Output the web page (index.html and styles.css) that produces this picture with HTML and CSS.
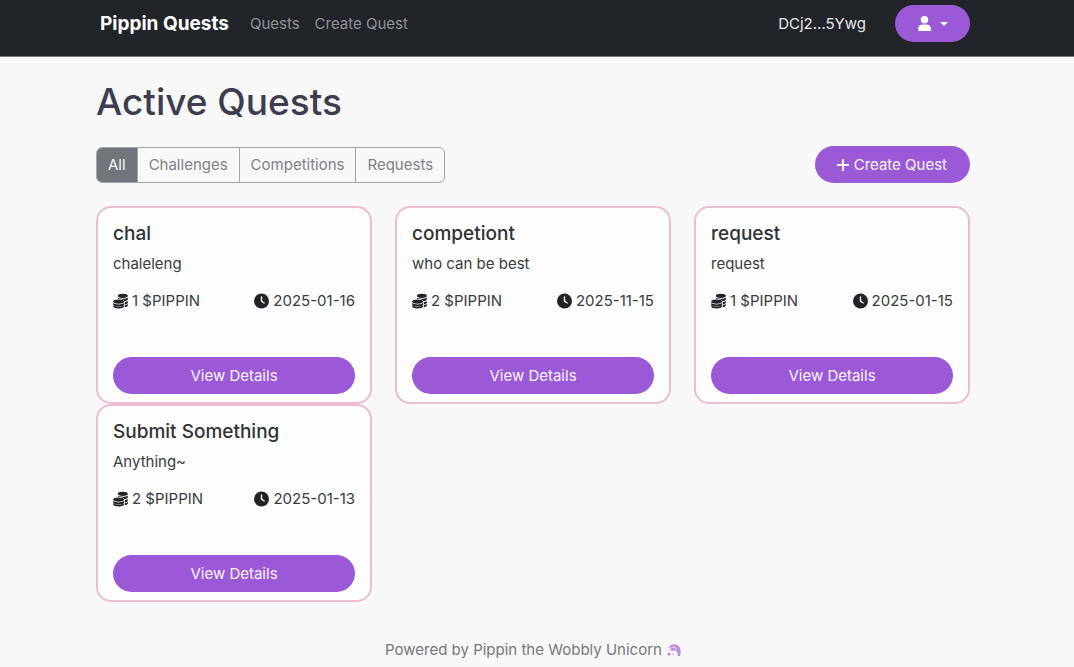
FILE: index.html
```html
<!DOCTYPE html>
<html lang="en">
<head>
    <meta charset="UTF-8">
    <meta name="viewport" content="width=device-width, initial-scale=1.0">
    <title>Pippin Quests</title>
    <link rel="stylesheet" href="styles.css">
</head>
<body>
    <!-- shared icons -->
    <svg class="sprite" aria-hidden="true">
        <symbol id="coins" viewBox="0 0 16 16">
            <ellipse cx="10.5" cy="2.5" rx="5.3" ry="2.3"/>
            <path d="M5.2 4.300c1.500 1.600 9 1.800 10.600-.1v1.800c0 1-1.500 1.900-3.600 2.100-1.200-1.700-4.200-2.500-7-2.400z"/>
            <path d="M12.600 9.100c1.300-.2 2.400-.6 3.200-1.200v1.900c0 .8-1.300 1.600-3.200 1.900z"/>
            <path d="M12.600 12.400c1.300-.2 2.400-.6 3.200-1.200v1.500c0 .8-1.300 1.600-3.200 1.900z"/>
            <ellipse cx="6" cy="8.600" rx="5.800" ry="2.200"/>
            <path d="M.2 10.200c1.700 1.900 9.900 1.900 11.600 0v2c0 2-11.600 2-11.600 0z"/>
            <path d="M.2 12.800c1.700 1.500 9.900 1.500 11.600 0v1c0 2.800-11.600 2.800-11.600 0z"/>
        </symbol>
        <symbol id="clock" viewBox="0 0 16 16">
            <circle cx="8" cy="8" r="8"/>
            <path d="M8 3.800v4.400l2.800 1.900" fill="none" stroke="#fdfdfd" stroke-width="1.500" stroke-linecap="round"/>
        </symbol>
    </svg>

    <header class="navbar">
        <nav class="container nav-inner">
            <a class="brand" href="#">Pippin Quests</a>
            <a class="nav-link" href="#">Quests</a>
            <a class="nav-link" href="#">Create Quest</a>
            <span class="wallet">DCj2...5Ywg</span>
            <button class="btn user-btn" type="button" aria-label="Account">
                <svg class="user-icon" viewBox="0 0 14 16">
                    <circle cx="7" cy="4" r="4"/>
                    <path d="M0 16v-2c0-3 2-5 5-5h4c3 0 5 2 5 5v2z"/>
                </svg>
                <span class="caret"></span>
            </button>
        </nav>
    </header>

    <main class="container">
        <h1 class="page-title">Active Quests</h1>

        <div class="toolbar">
            <div class="filters">
                <button class="filter active" type="button">All</button>
                <button class="filter" type="button">Challenges</button>
                <button class="filter" type="button">Competitions</button>
                <button class="filter" type="button">Requests</button>
            </div>
            <button class="btn create-btn" type="button">
                <svg class="plus-icon" viewBox="0 0 12 12"><path d="M6 0v12M0 6h12"/></svg>
                Create Quest
            </button>
        </div>

        <div class="quests">
            <article class="card">
                <h2 class="card-title">chal</h2>
                <p class="card-text">chaleleng</p>
                <div class="card-info">
                    <span class="info"><svg class="icon"><use href="#coins"/></svg>1 $PIPPIN</span>
                    <span class="info"><svg class="icon"><use href="#clock"/></svg>2025-01-16</span>
                </div>
                <button class="btn details-btn" type="button">View Details</button>
            </article>
            <article class="card">
                <h2 class="card-title">competiont</h2>
                <p class="card-text">who can be best</p>
                <div class="card-info">
                    <span class="info"><svg class="icon"><use href="#coins"/></svg>2 $PIPPIN</span>
                    <span class="info"><svg class="icon"><use href="#clock"/></svg>2025-11-15</span>
                </div>
                <button class="btn details-btn" type="button">View Details</button>
            </article>
            <article class="card">
                <h2 class="card-title">request</h2>
                <p class="card-text">request</p>
                <div class="card-info">
                    <span class="info"><svg class="icon"><use href="#coins"/></svg>1 $PIPPIN</span>
                    <span class="info"><svg class="icon"><use href="#clock"/></svg>2025-01-15</span>
                </div>
                <button class="btn details-btn" type="button">View Details</button>
            </article>
            <article class="card">
                <h2 class="card-title">Submit Something</h2>
                <p class="card-text">Anything~</p>
                <div class="card-info">
                    <span class="info"><svg class="icon"><use href="#coins"/></svg>2 $PIPPIN</span>
                    <span class="info"><svg class="icon"><use href="#clock"/></svg>2025-01-13</span>
                </div>
                <button class="btn details-btn" type="button">View Details</button>
            </article>
        </div>
    </main>

    <footer class="footer">
        Powered by Pippin the Wobbly Unicorn
        <svg class="unicorn" viewBox="0 0 14 14">
            <path d="M2 4.500C4 .5 10 0 12.500 4c1.500 2.500 1.500 6 .5 9h-2.500c1-3-.5-5-3-5.500L4.500 8z" fill="#bd8fd8"/>
            <path d="M3 5.500l4-1.500 3 2.500" fill="none" stroke="#f0daf6"/>
            <circle cx="2" cy="11" r="1.500" fill="#b884d8"/>
            <circle cx="6" cy="11.500" r="1" fill="#e2b8e6"/>
        </svg>
    </footer>
</body>
</html>
```
FILE: styles.css
```css
*{
    box-sizing: border-box;
}
body{
    margin: 0;
    background-color: #f8f8f8;
    color: #3a3b3e;
    font-family: Inter, "Liberation Sans", sans-serif;
    font-size: 15px;
    line-height: 22px;
}
button{
    font: inherit;
}
.sprite{
    display: none;
}
.container{
    max-width: 1140px;
    margin: 0 104px 0 96px;
}

/* navbar */
.navbar{
    background-color: #212429;
    border-bottom: 1px solid #77787b;
}
.nav-inner{
    display: flex;
    align-items: center;
    height: 56px;
    padding: 0 0 9px 4px;
}
.brand{
    margin-right: 21px;
    color: #fff;
    font-size: 19px;
    font-weight: 700;
    text-decoration: none;
}
.nav-link{
    margin-right: 15px;
    color: #919295;
    text-decoration: none;
}
.wallet{
    margin-left: auto;
    margin-right: 29px;
    color: #e8e8e9;
}
.btn{
    display: flex;
    align-items: center;
    justify-content: center;
    height: 37px;
    border: 0;
    border-radius: 19px;
    background-color: #9b59d8;
    color: #fbf5ff;
    cursor: pointer;
}
.user-btn{
    gap: 9px;
    width: 75px;
    padding: 0;
}
.user-icon{
    width: 13px;
    height: 15px;
    fill: #fff;
}
.caret{
    border: 4px solid transparent;
    border-top-color: #fff;
    border-bottom: 0;
}

/* heading and filters */
.page-title{
    margin: 22px 0 21px;
    color: #3d3d4f;
    font-size: 37px;
    font-weight: 500;
    line-height: 46px;
}
.toolbar{
    display: flex;
    justify-content: space-between;
    align-items: center;
    margin-bottom: 23px;
}
.filters{
    display: flex;
    border: 1px solid #a2a4a6;
    border-radius: 6px;
    overflow: hidden;
}
.filter{
    height: 34px;
    padding: 0 11px;
    border: 0;
    border-left: 1px solid #a2a4a6;
    background-color: transparent;
    color: #808286;
    cursor: pointer;
}
.filter.active{
    border-left: 0;
    background-color: #70757c;
    color: #f4f4f4;
}
.create-btn{
    gap: 5px;
    padding: 0 23px 0 22px;
}
.plus-icon{
    width: 12px;
    height: 12px;
    stroke: #fbf5ff;
    stroke-width: 2;
}

/* quest cards */
.quests{
    display: grid;
    grid-template-columns: repeat(3, 1fr);
    column-gap: 23px;
}
.card{
    padding: 15px 15px 8px;
    border: 2px solid #ecbcd2;
    border-radius: 15px;
    background-color: #fdfdfd;
}
.card-title{
    margin: 0 0 8px;
    color: #303236;
    font-size: 19px;
    font-weight: 500;
    line-height: 22px;
}
.card-text{
    margin: 0 0 15px;
}
.card-info{
    display: flex;
    justify-content: space-between;
    margin-bottom: 45px;
}
.info{
    display: flex;
    align-items: center;
    gap: 4px;
}
.icon{
    width: 15px;
    height: 16px;
    fill: #222327;
}
.details-btn{
    width: 100%;
}

.footer{
    display: flex;
    justify-content: center;
    align-items: center;
    gap: 5px;
    margin-top: 37px;
    padding-right: 8px;
    color: #75777a;
}
.unicorn{
    width: 14px;
    height: 14px;
}
```
